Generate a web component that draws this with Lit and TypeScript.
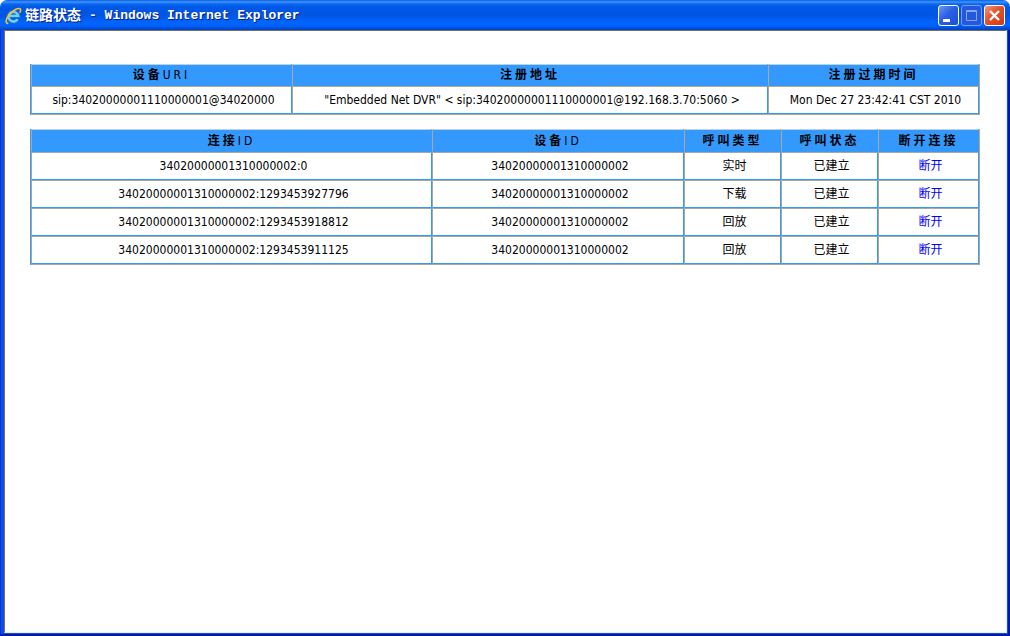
import { LitElement, html, css, svg } from "lit";
import { customElement, property } from "lit/decorators.js";

interface Registration {
  uri: string;
  address: string;
  expires: string;
}

interface Link {
  id: string;
  device: string;
  type: string;
  state: string;
}

const registrations: Registration[] = [
  {
    uri: "sip:34020000001110000001@34020000",
    address: '"Embedded Net DVR" < sip:34020000001110000001@192.168.3.70:5060 >',
    expires: "Mon Dec 27 23:42:41 CST 2010",
  },
];

const links: Link[] = [
  { id: "34020000001310000002:0", device: "34020000001310000002", type: "实时", state: "已建立" },
  { id: "34020000001310000002:1293453927796", device: "34020000001310000002", type: "下载", state: "已建立" },
  { id: "34020000001310000002:1293453918812", device: "34020000001310000002", type: "回放", state: "已建立" },
  { id: "34020000001310000002:1293453911125", device: "34020000001310000002", type: "回放", state: "已建立" },
];

@customElement("title-bar")
export class TitleBar extends LitElement {
  @property() heading = "";

  static styles = css`
    :host {
      display: flex;
      align-items: center;
      gap: 3px;
      height: 30px;
      padding: 1px 5px 0;
      box-sizing: border-box;
      border-radius: 7px 7px 0 0;
      background: linear-gradient(
        #0a5be0 0,
        #3d95ff 2px,
        #0868f0 4px,
        #0058e6 7px,
        #0055e2 15px,
        #0062fa 21px,
        #0066ff 25px,
        #0058ea 27px,
        #0040c0 30px
      );
    }
    .logo {
      flex: none;
      width: 17px;
      height: 18px;
    }
    .title {
      flex: 1;
      display: flex;
      align-items: center;
      gap: 8px;
      min-width: 0;
      margin: 0;
      overflow: hidden;
      white-space: nowrap;
      color: #fff;
      text-shadow: 1px 1px 0 #0a1f80;
      font: bold 13px/20px "Liberation Mono", "Noto Sans CJK SC", monospace;
    }
    .name {
      font-size: 14px;
    }
    .controls {
      display: flex;
      gap: 2px;
    }
    .control {
      display: block;
      width: 21px;
      height: 21px;
      padding: 0;
      box-sizing: border-box;
      border: 1px solid #fff;
      border-radius: 3px;
      background: linear-gradient(135deg, #6f97f5, #2a5fe6 45%, #1c4fd8);
    }
    .control:disabled {
      border-color: #7b9cf0;
      background: #2358e0;
    }
    .close {
      background: linear-gradient(135deg, #f0987c, #e2512c 45%, #cf3a12);
    }
    .control svg {
      display: block;
    }
  `;

  render() {
    return html`
      <svg class="logo" viewBox="0 0 17 18" aria-hidden="true">
        <path
          d="M12.7 12.4A5 5 0 1 1 13.4 8.9H5"
          fill="none"
          stroke="#1c72c8"
          stroke-width="4"
        />
        <path
          d="M12.6 12.2A4.8 4.8 0 1 1 13.2 8.9H5"
          fill="none"
          stroke="#6fd0fa"
          stroke-width="2.4"
        />
        <path
          d="M2.6 16.4C-1.5 15.5 3.4 6.6 10 2.8C14.6.2 16.8 1.6 15 5.2"
          fill="none"
          stroke="#f2c331"
          stroke-width="1.6"
          stroke-linecap="round"
        />
      </svg>
      <h1 class="title">
        <span class="name">${this.heading}</span>
        <span>- Windows Internet Explorer</span>
      </h1>
      <div class="controls">
        <button class="control" aria-label="最小化">
          ${this.glyph(svg`<path d="M4 13h7v3H4z" fill="#fff" />`)}
        </button>
        <button class="control" aria-label="最大化" disabled>
          ${this.glyph(svg`<path d="M4.5 4.5h10v10h-10zM4 5.5h11" fill="none" stroke="#87a5f4" />`)}
        </button>
        <button class="control close" aria-label="关闭">
          ${this.glyph(svg`<path d="M5 5l9 9M14 5l-9 9" fill="none" stroke="#fff" stroke-width="2.4" />`)}
        </button>
      </div>
    `;
  }

  private glyph(shape: unknown) {
    return html`<svg width="19" height="19" viewBox="0 0 19 19" aria-hidden="true">${shape}</svg>`;
  }
}

@customElement("app-root")
export class AppRoot extends LitElement {
  static styles = css`
    :host {
      display: flex;
      flex-direction: column;
      min-height: 100vh;
      box-sizing: border-box;
      background: linear-gradient(#fff 0 12px, #0038d8 12px);
    }
    .frame {
      flex: 1;
      display: flex;
      padding: 0 1px 1px 3px;
      border: solid #0019a8;
      border-width: 0 2px 2px 1px;
      border-left-color: #0831d9;
      background: #0a50e8;
    }
    .page {
      flex: 1;
      min-width: 0;
      padding: 33px 26px 33px 25px;
      border: 1px solid #f1eee0;
      border-top-color: #716f64;
      border-left-color: #716f64;
      background: #fff;
      display: flex;
      flex-direction: column;
      gap: 14px;
    }
    .grid {
      width: 100%;
      table-layout: fixed;
      border-collapse: separate;
      border-spacing: 0;
      border: 1px solid #aca899;
      border-left-color: #3399ff;
      border-top: 0;
      font: 12px/18px "DejaVu Sans Condensed", "Noto Sans CJK SC", sans-serif;
      color: #000;
      text-align: center;
    }
    .head,
    .cell {
      box-sizing: border-box;
      border: 1px solid #3399ff;
      border-top-color: #aca899;
      border-left-color: #aca899;
      white-space: nowrap;
    }
    .head {
      height: 22px;
      padding: 0;
      background: #3399ff;
      border-top-color: #b9d3e6;
      letter-spacing: 3px;
      font-weight: normal;
    }
    .strong {
      font-weight: bold;
    }
    .cell {
      height: 28px;
      padding: 4px 0 4px 4px;
    }
    .uri {
      width: 261px;
    }
    .expires {
      width: 211px;
    }
    .links .head {
      height: 23px;
    }
    .device {
      width: 252px;
    }
    .short {
      width: 97px;
    }
    .action {
      width: 101px;
    }
    .cut {
      color: #0000ff;
      text-decoration: none;
    }
  `;

  render() {
    return html`
      <title-bar heading="链路状态"></title-bar>
      <div class="frame">
        <main class="page">
          <table class="grid">
            <thead>
              <tr>
                <th class="head uri"><span class="strong">设备</span>URI</th>
                <th class="head strong">注册地址</th>
                <th class="head strong expires">注册过期时间</th>
              </tr>
            </thead>
            <tbody>
              ${registrations.map(
                (r) => html`<tr>
                  <td class="cell">${r.uri}</td>
                  <td class="cell">${r.address}</td>
                  <td class="cell">${r.expires}</td>
                </tr>`
              )}
            </tbody>
          </table>
          <table class="grid links">
            <thead>
              <tr>
                <th class="head"><span class="strong">连接</span>ID</th>
                <th class="head device"><span class="strong">设备</span>ID</th>
                <th class="head strong short">呼叫类型</th>
                <th class="head strong short">呼叫状态</th>
                <th class="head strong action">断开连接</th>
              </tr>
            </thead>
            <tbody>
              ${links.map(
                (l) => html`<tr>
                  <td class="cell">${l.id}</td>
                  <td class="cell">${l.device}</td>
                  <td class="cell">${l.type}</td>
                  <td class="cell">${l.state}</td>
                  <td class="cell"><a class="cut" href="#">断开</a></td>
                </tr>`
              )}
            </tbody>
          </table>
        </main>
      </div>
    `;
  }
}
